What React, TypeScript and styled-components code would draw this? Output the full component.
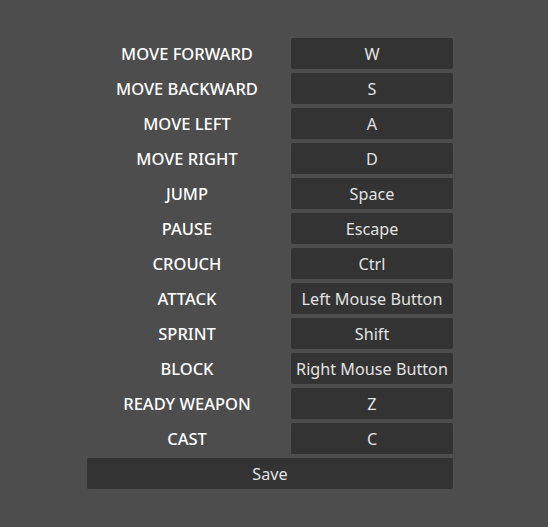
import React from 'react';
import styled, { createGlobalStyle } from 'styled-components';

const GlobalStyle = createGlobalStyle`
  html, body {
    margin: 0;
    padding: 0;
    background: #4d4d4d;
  }
  body {
    font-family: 'Noto Sans', 'Open Sans', sans-serif;
  }
`;

const Page = styled.div`
  width: 548px;
  height: 527px;
  padding: 38px 0 0 87px;
  box-sizing: border-box;
  background: #4d4d4d;
`;

const Bindings = styled.div`
  display: grid;
  grid-template-columns: 200px 162px;
  grid-auto-rows: 31px;
  column-gap: 4px;
  row-gap: 4px;
  width: 366px;
`;

const ActionLabel = styled.div`
  display: flex;
  align-items: center;
  justify-content: center;
  color: #ffffff;
  font-size: 16.5px;
  font-weight: 500;
  white-space: nowrap;
`;

const KeyButton = styled.button<{ $wide?: boolean }>`
  display: flex;
  align-items: center;
  justify-content: center;
  grid-column: ${(p) => (p.$wide ? '1 / span 2' : 'auto')};
  margin: 0;
  padding: 0;
  border: none;
  border-radius: 2px;
  background: #333333;
  color: #e2e2e2;
  font-family: 'Noto Sans', 'Open Sans', sans-serif;
  font-size: 16.2px;
  white-space: nowrap;
  cursor: pointer;
`;

const keymap: [string, string][] = [
  ['MOVE FORWARD', 'W'],
  ['MOVE BACKWARD', 'S'],
  ['MOVE LEFT', 'A'],
  ['MOVE RIGHT', 'D'],
  ['JUMP', 'Space'],
  ['PAUSE', 'Escape'],
  ['CROUCH', 'Ctrl'],
  ['ATTACK', 'Left Mouse Button'],
  ['SPRINT', 'Shift'],
  ['BLOCK', 'Right Mouse Button'],
  ['READY WEAPON', 'Z'],
  ['CAST', 'C'],
];

export default function App() {
  return (
    <Page>
      <GlobalStyle />
      <Bindings>
        {keymap.map(([action, key]) => (
          <React.Fragment key={action}>
            <ActionLabel>{action}</ActionLabel>
            <KeyButton>{key}</KeyButton>
          </React.Fragment>
        ))}
        <KeyButton $wide>Save</KeyButton>
      </Bindings>
    </Page>
  );
}
